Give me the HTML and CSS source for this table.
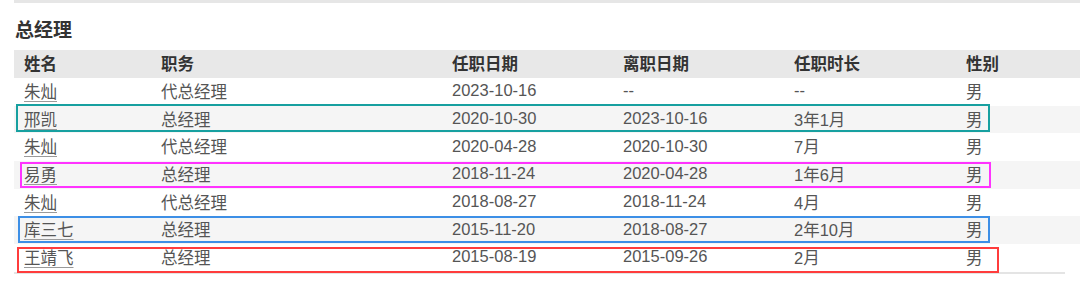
FILE: index.html
```html
<!DOCTYPE html>
<html lang="zh">
<head>
<meta charset="utf-8">
<link rel="stylesheet" href="styles.css">
</head>
<body>
<div class="page">
  <div class="topbar"></div>
  <h2 class="title">总经理</h2>
  <div class="table-wrap" role="table">
    <div class="row head" role="row"><div>姓名</div><div>职务</div><div>任职日期</div><div>离职日期</div><div>任职时长</div><div>性别</div></div>
    <div class="row" role="row"><div><a class="name">朱灿</a></div><div>代总经理</div><div>2023-10-16</div><div>--</div><div>--</div><div>男</div></div>
    <div class="row alt" role="row"><div><a class="name">邢凯</a></div><div>总经理</div><div>2020-10-30</div><div>2023-10-16</div><div>3年1月</div><div>男</div></div>
    <div class="row" role="row"><div><a class="name">朱灿</a></div><div>代总经理</div><div>2020-04-28</div><div>2020-10-30</div><div>7月</div><div>男</div></div>
    <div class="row alt" role="row"><div><a class="name">易勇</a></div><div>总经理</div><div>2018-11-24</div><div>2020-04-28</div><div>1年6月</div><div>男</div></div>
    <div class="row" role="row"><div><a class="name">朱灿</a></div><div>代总经理</div><div>2018-08-27</div><div>2018-11-24</div><div>4月</div><div>男</div></div>
    <div class="row alt" role="row"><div><a class="name">库三七</a></div><div>总经理</div><div>2015-11-20</div><div>2018-08-27</div><div>2年10月</div><div>男</div></div>
    <div class="row last" role="row"><div><a class="name">王靖飞</a></div><div>总经理</div><div>2015-08-19</div><div>2015-09-26</div><div>2月</div><div>男</div></div>
    <div class="mark mark-teal"></div>
    <div class="mark mark-magenta"></div>
    <div class="mark mark-blue"></div>
    <div class="mark mark-red"></div>
  </div>
</div>
</body>
</html>
```
FILE: styles.css
```css
html, body {
  margin: 0;
  padding: 0;
  background: #ffffff;
}
.page {
  padding-left: 14px;
  font-family: "Liberation Sans", "Noto Sans CJK SC", sans-serif;
  color: #555;
}
.topbar {
  height: 3px;
  background: #e6e6e6;
}
.title {
  margin: 16px 0 7px 1px;
  font-size: 19px;
  line-height: 24px;
  font-weight: bold;
  color: #333;
}
.table-wrap {
  position: relative;
  font-size: 16.5px;
}
.row {
  display: grid;
  grid-template-columns: 137px 291px 171px 171px 172px 1fr;
  height: 27.7px;
  align-items: center;
  white-space: nowrap;
}
.row > div {
  padding-left: 10px;
  padding-bottom: 2px;
}
.row.head {
  height: 28px;
  background: #e8e8e8;
  color: #333;
  font-weight: bold;
}
.row.alt {
  background: #f5f5f5;
}
.row.last {
  border-bottom: 2px solid #e4e4e4;
  width: 1051px;
}
.name {
  color: #555;
  text-decoration: underline;
  text-decoration-color: #9a9a9a;
  text-underline-offset: 3px;
}
.mark {
  position: absolute;
  box-sizing: border-box;
  border: 2px solid;
  pointer-events: none;
}
.mark-teal {
  left: 2px; top: 54px; width: 974px; height: 28px;
  border-color: #17a0a0;
}
.mark-magenta {
  left: 6px; top: 112px; width: 971px; height: 26px;
  border-color: #ff33ff;
}
.mark-blue {
  left: 4px; top: 166px; width: 972px; height: 27px;
  border-color: #3d8fe6;
}
.mark-red {
  left: 3px; top: 197px; width: 982px; height: 26px;
  border-color: #ff3c3c;
}
```
